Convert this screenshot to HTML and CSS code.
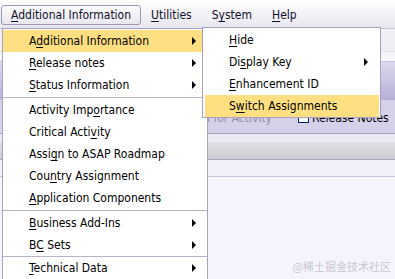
FILE: index.html
```html
<!DOCTYPE html>
<html lang="en">
<head>
<meta charset="UTF-8">
<title>Additional Information menu</title>
<link rel="stylesheet" href="styles.css">
</head>
<body>
<div class="window">

  <div class="menubar">
    <div class="mb-item active"><u>A</u>dditional Information</div>
    <div class="mb-item"><u>U</u>tilities</div>
    <div class="mb-item">S<u>y</u>stem</div>
    <div class="mb-item"><u>H</u>elp</div>
  </div>

  <div class="band title-strip"></div>
  <div class="band sub-strip"></div>
  <div class="band title-bar"></div>

  <div class="toolbar">
    <span class="tb-hint">Information for Activity</span>
    <span class="tb-button">
      <svg class="tb-icon" width="11" height="10" viewBox="0 0 11 10">
        <rect x="0.5" y="0.5" width="10" height="9" fill="#fff" stroke="#0a246a"/>
        <rect x="1" y="1" width="9" height="2" fill="#0a246a"/>
      </svg>
      <span>Release Notes</span>
    </span>
  </div>

  <div class="band light-strip"></div>
  <div class="band grey-strip"></div>
  <div class="band pale-strip"></div>
  <div class="workarea"></div>

</div>

<!-- dropdown: Additional Information -->
<div class="menu menu-main">
  <div class="menu-row hover"><span>A<u>d</u>ditional Information</span><span class="arrow"></span></div>
  <div class="menu-row"><span><u>R</u>elease notes</span><span class="arrow"></span></div>
  <div class="menu-row"><span><u>S</u>tatus Information</span><span class="arrow"></span></div>
  <div class="menu-sep"></div>
  <div class="menu-row"><span>Activity Imp<u>o</u>rtance</span></div>
  <div class="menu-row"><span>Critical Acti<u>v</u>ity</span></div>
  <div class="menu-row"><span>Assi<u>g</u>n to ASAP Roadmap</span></div>
  <div class="menu-row"><span>Cou<u>n</u>try Assignment</span></div>
  <div class="menu-row"><span><u>A</u>pplication Components</span></div>
  <div class="menu-sep"></div>
  <div class="menu-row"><span><u>B</u>usiness Add-Ins</span><span class="arrow"></span></div>
  <div class="menu-row"><span>B<u>C</u> Sets</span><span class="arrow"></span></div>
  <div class="menu-sep thin"></div>
  <div class="menu-row"><span><u>T</u>echnical Data</span><span class="arrow"></span></div>
</div>

<!-- submenu -->
<div class="menu menu-sub">
  <div class="menu-row"><span><u>H</u>ide</span></div>
  <div class="menu-row"><span>Di<u>s</u>play Key</span><span class="arrow"></span></div>
  <div class="menu-row"><span><u>E</u>nhancement ID</span></div>
  <div class="menu-row hover"><span>S<u>w</u>itch Assignments</span></div>
</div>

<div class="watermark">@稀土掘金技术社区</div>

</body>
</html>
```

FILE: styles.css
```css
body {
  margin: 0;
  width: 395px;
  height: 279px;
  overflow: hidden;
  position: relative;
  font-family: "DejaVu Sans Condensed", "Liberation Sans", sans-serif;
  font-size: 12px;
  color: #000;
  background: #f5f4fc;
}

u {
  text-underline-offset: 2px;
}

.window {
  display: flex;
  flex-direction: column;
  height: 279px;
}

/* menu bar */
.menubar {
  height: 29px;
  box-sizing: border-box;
  padding: 5px 0 0 1px;
  display: flex;
  color: #10102a;
  background: linear-gradient(#ffffff, #e7e6ee);
  border-bottom: 1px solid #c9c6d6;
}

.mb-item {
  height: 18px;
  line-height: 19px;
  padding: 0 9px;
  border: 1px solid transparent;
  border-radius: 3px;
}

.mb-item.active {
  border-color: #9c97b4;
  background: linear-gradient(#fbfbfd, #e9e8f0);
}

/* background strips */
.band {
  flex: none;
}

.title-strip {
  height: 22px;
  background: #efeef4;
  border-bottom: 1px solid #e2e0ea;
}

.sub-strip {
  height: 9px;
  background: #f6f5fa;
  border-bottom: 1px solid #c8c3dc;
}

.title-bar {
  height: 38px;
  background: linear-gradient(#ddd8ef, #b8afd7);
}

.toolbar {
  flex: none;
  height: 34px;
  box-sizing: border-box;
  padding: 10px 0 0 14px;
  display: flex;
  align-items: flex-start;
  gap: 26px;
  line-height: 16px;
  background: #d5d1e8;
  border-bottom: 1px solid #a9a3c3;
}

.tb-hint {
  width: 258px;
  text-align: right;
  color: #928daa;
  white-space: nowrap;
}

.tb-button {
  display: flex;
  align-items: center;
  gap: 3px;
  white-space: nowrap;
}

.light-strip {
  height: 8px;
  background: #ebe9f4;
}

.grey-strip {
  height: 17px;
  background: linear-gradient(#e0dfe5, #cecdd5);
  border-bottom: 1px solid #aaa5c0;
}

.pale-strip {
  height: 16px;
  background: #f1f0f8;
  border-bottom: 1px solid #c7c3d9;
}

.workarea {
  flex: 1;
  background: #f5f4fc;
}

/* dropdown menus */
.menu {
  position: absolute;
  background: #fff;
  border: 1px solid #a7a1c2;
  box-sizing: border-box;
}

.menu-main {
  left: 2px;
  top: 28px;
  width: 206px;
  height: 260px;
  padding-top: 1px;
}

.menu-sub {
  left: 202px;
  top: 27px;
  width: 179px;
  padding: 1px 1px 0 2px;
}

.menu-row {
  height: 22px;
  display: flex;
  align-items: center;
  padding: 0 11px 0 26px;
  white-space: nowrap;
}

.menu-sub .menu-row {
  padding-left: 24px;
}

.menu-row.hover {
  background: #ffdf82;
}

.arrow {
  margin-left: auto;
  width: 0;
  height: 0;
  border-left: 4px solid #000;
  border-top: 4px solid transparent;
  border-bottom: 4px solid transparent;
}

.menu-sep {
  height: 1px;
  margin: 1px 0;
  background: #b7b2ca;
}

.menu-sep.thin {
  margin: 0;
}

.watermark {
  position: absolute;
  right: 4px;
  bottom: 5px;
  font-family: "Noto Sans CJK SC", sans-serif;
  font-size: 11px;
  color: #c9c8d2;
}
```
